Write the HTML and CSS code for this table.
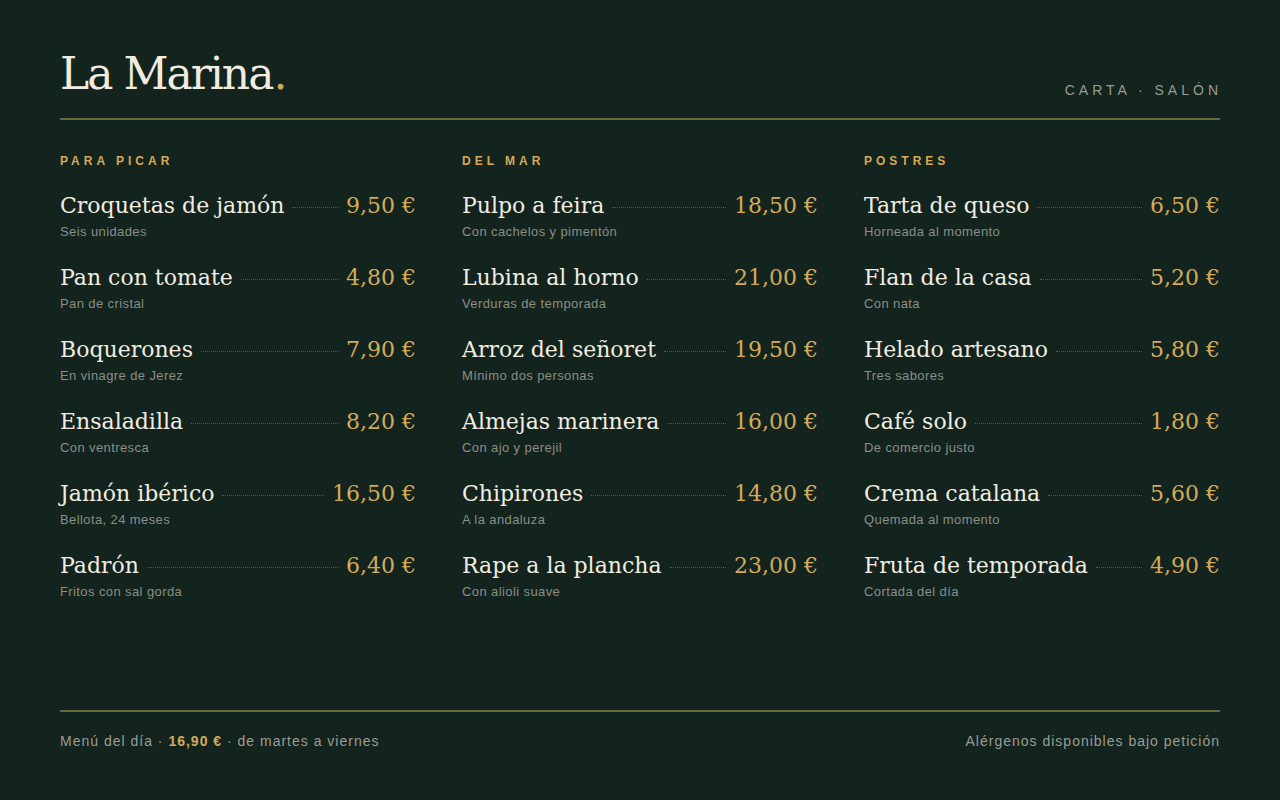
FILE: index.html
```html
<!DOCTYPE html>
<html lang="es">
<head>
<meta charset="utf-8">
<title>La Marina · Carta</title>
<link rel="stylesheet" href="styles.css">
</head>
<body>
<div class="page">
  <header class="header">
    <h1 class="brand">La Marina<span class="dot">.</span></h1>
    <div class="tag">CARTA · SALÓN</div>
  </header>

  <main class="menu">
    <section class="col">
      <h2 class="sec">PARA PICAR</h2>
      <div class="item"><div class="row"><span class="name">Croquetas de jamón</span><span class="lead"></span><span class="price">9,50 €</span></div><div class="desc">Seis unidades</div></div>
      <div class="item"><div class="row"><span class="name">Pan con tomate</span><span class="lead"></span><span class="price">4,80 €</span></div><div class="desc">Pan de cristal</div></div>
      <div class="item"><div class="row"><span class="name">Boquerones</span><span class="lead"></span><span class="price">7,90 €</span></div><div class="desc">En vinagre de Jerez</div></div>
      <div class="item"><div class="row"><span class="name">Ensaladilla</span><span class="lead"></span><span class="price">8,20 €</span></div><div class="desc">Con ventresca</div></div>
      <div class="item"><div class="row"><span class="name">Jamón ibérico</span><span class="lead"></span><span class="price">16,50 €</span></div><div class="desc">Bellota, 24 meses</div></div>
      <div class="item"><div class="row"><span class="name">Padrón</span><span class="lead"></span><span class="price">6,40 €</span></div><div class="desc">Fritos con sal gorda</div></div>
    </section>
    <section class="col">
      <h2 class="sec">DEL MAR</h2>
      <div class="item"><div class="row"><span class="name">Pulpo a feira</span><span class="lead"></span><span class="price">18,50 €</span></div><div class="desc">Con cachelos y pimentón</div></div>
      <div class="item"><div class="row"><span class="name">Lubina al horno</span><span class="lead"></span><span class="price">21,00 €</span></div><div class="desc">Verduras de temporada</div></div>
      <div class="item"><div class="row"><span class="name">Arroz del señoret</span><span class="lead"></span><span class="price">19,50 €</span></div><div class="desc">Mínimo dos personas</div></div>
      <div class="item"><div class="row"><span class="name">Almejas marinera</span><span class="lead"></span><span class="price">16,00 €</span></div><div class="desc">Con ajo y perejil</div></div>
      <div class="item"><div class="row"><span class="name">Chipirones</span><span class="lead"></span><span class="price">14,80 €</span></div><div class="desc">A la andaluza</div></div>
      <div class="item"><div class="row"><span class="name">Rape a la plancha</span><span class="lead"></span><span class="price">23,00 €</span></div><div class="desc">Con alioli suave</div></div>
    </section>
    <section class="col">
      <h2 class="sec">POSTRES</h2>
      <div class="item"><div class="row"><span class="name">Tarta de queso</span><span class="lead"></span><span class="price">6,50 €</span></div><div class="desc">Horneada al momento</div></div>
      <div class="item"><div class="row"><span class="name">Flan de la casa</span><span class="lead"></span><span class="price">5,20 €</span></div><div class="desc">Con nata</div></div>
      <div class="item"><div class="row"><span class="name">Helado artesano</span><span class="lead"></span><span class="price">5,80 €</span></div><div class="desc">Tres sabores</div></div>
      <div class="item"><div class="row"><span class="name">Café solo</span><span class="lead"></span><span class="price">1,80 €</span></div><div class="desc">De comercio justo</div></div>
      <div class="item"><div class="row"><span class="name">Crema catalana</span><span class="lead"></span><span class="price">5,60 €</span></div><div class="desc">Quemada al momento</div></div>
      <div class="item"><div class="row"><span class="name">Fruta de temporada</span><span class="lead"></span><span class="price">4,90 €</span></div><div class="desc">Cortada del día</div></div>
    </section>
  </main>

  <footer class="footer">
    <div>Menú del día · <strong class="gold">16,90 €</strong> · de martes a viernes</div>
    <div>Alérgenos disponibles bajo petición</div>
  </footer>
</div>
</body>
</html>
```

FILE: styles.css
```css
* { box-sizing: border-box; }
html, body { margin: 0; padding: 0; }
body {
  background: #13231d;
  color: #f1ece0;
  font-family: "Liberation Sans", Arial, sans-serif;
}
.page {
  height: 800px;
  padding: 52px 60px 50px;
  display: flex;
  flex-direction: column;
}
.header {
  display: flex;
  justify-content: space-between;
  align-items: flex-end;
  padding-bottom: 22px;
  border-bottom: 2px solid #6e6a3f;
}
.brand {
  margin: 0;
  font-family: "DejaVu Serif", Georgia, serif;
  font-weight: 400;
  font-size: 44px;
  line-height: 1;
  letter-spacing: -2px;
  color: #f1ece0;
}
.dot { color: #d4ab5a; margin-left: 1px; }
.tag {
  font-size: 14px;
  line-height: 14px;
  letter-spacing: 4px;
  color: #9a9d94;
  margin-right: -2px;
  margin-bottom: -1px;
}
.menu {
  flex: 1;
  display: grid;
  grid-template-columns: repeat(3, 1fr);
  column-gap: 46px;
  padding-top: 34px;
  align-content: start;
}
.sec {
  margin: 0 0 23px;
  font-size: 12px;
  font-weight: 700;
  letter-spacing: 4px;
  color: #d4ab5a;
  line-height: 14px;
}
.item {
  height: 72px;
}
.row {
  display: flex;
  align-items: baseline;
  height: 30px;
}
.name {
  font-family: "DejaVu Serif", Georgia, serif;
  font-size: 22px;
  line-height: 30px;
  color: #f1ece0;
  white-space: nowrap;
}
.lead {
  flex: 1;
  border-bottom: 1px dotted #4f5a4f;
  margin: 0 8px;
  position: relative;
  top: -5px;
}
.price {
  font-family: "DejaVu Serif", Georgia, serif;
  font-size: 22px;
  line-height: 30px;
  color: #d4ab5a;
  white-space: nowrap;
}
.desc {
  font-size: 13px;
  line-height: 16px;
  letter-spacing: 0.4px;
  color: #8a8f87;
  margin-top: 3px;
}
.footer {
  display: flex;
  justify-content: space-between;
  border-top: 2px solid #6e6a3f;
  padding-top: 21px;
  font-size: 14px;
  letter-spacing: 1px;
  color: #9a9d94;
  line-height: 17px;
}
.gold { color: #d4ab5a; font-weight: 700; }
```
